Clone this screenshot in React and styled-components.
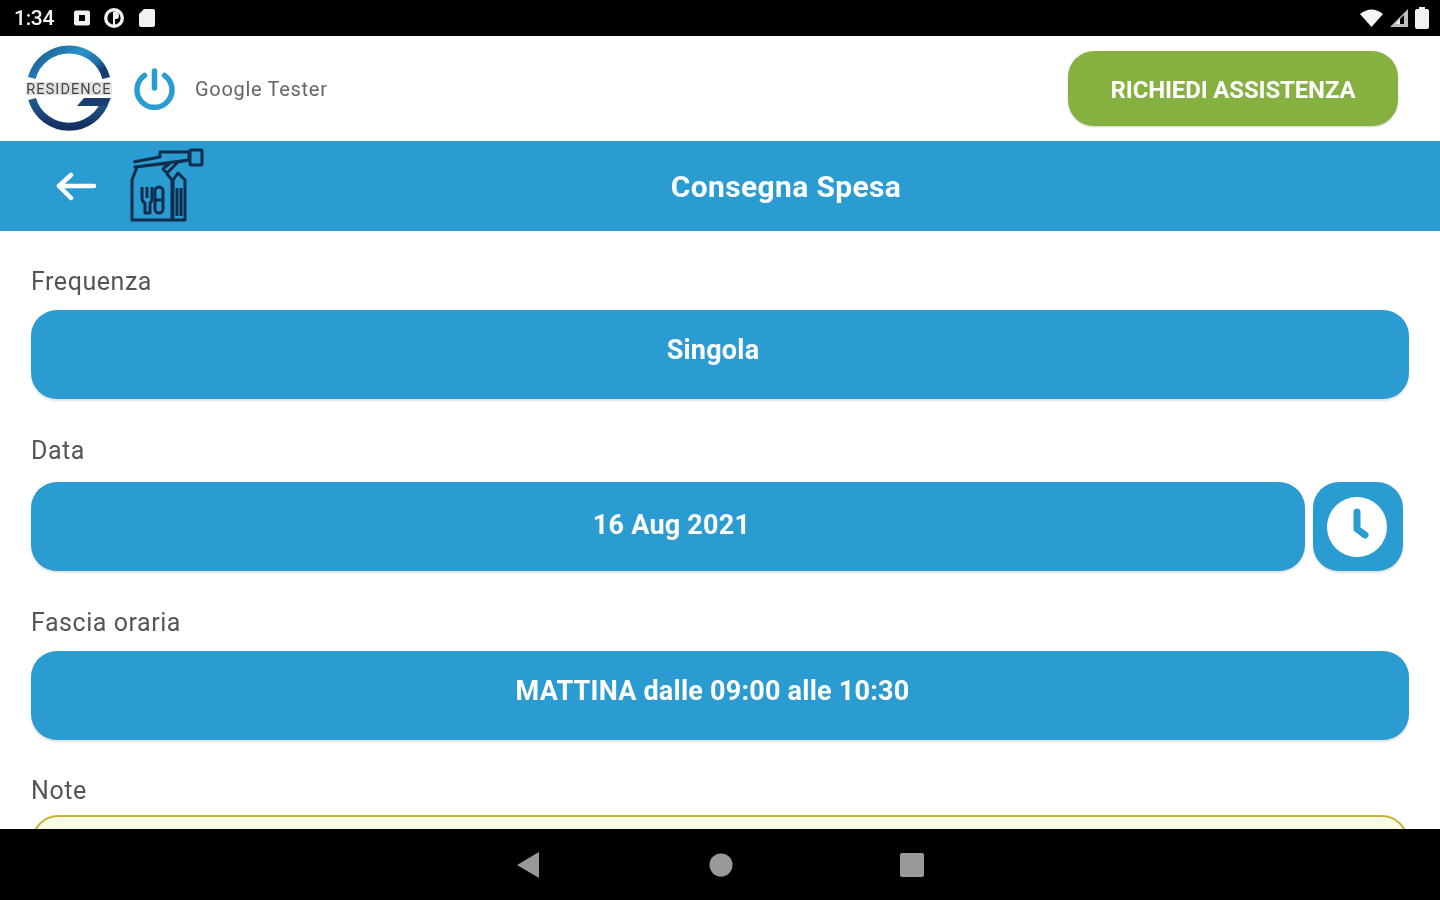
import React from "react";
import styled, { createGlobalStyle } from "styled-components";

const Global = createGlobalStyle`
  html, body { margin: 0; padding: 0; background: #fff; }
  body { font-family: Roboto, "Liberation Sans", sans-serif; }
`;
const Screen = styled.div`
  width: 1440px; height: 900px; display: flex; flex-direction: column; overflow: hidden; background: #fff;
`;
const StatusBar = styled.div`
  height: 36px; flex: none; background: #000; color: #f2f2f2; display: flex; align-items: center;
  justify-content: space-between; padding: 0 11px 0 14px; box-sizing: border-box;
`;
const StatusGroup = styled.div`
  display: flex; align-items: center; gap: ${p => p.$gap || 11}px;
`;
const Clock = styled.span`
  font-size: 21px; font-weight: 500; letter-spacing: -0.3px; margin-right: 9px; filter: blur(0.5px);
`;
const Header = styled.header`
  height: 105px; flex: none; display: flex; align-items: center; padding: 0 42px 0 26px; box-sizing: border-box;
`;
const UserName = styled.span`
  font-size: 20px; color: #666; letter-spacing: 0.7px; margin-left: 19px; margin-top: 1px; filter: blur(0.5px);
`;
const Assist = styled.button`
  margin-left: auto; width: 330px; height: 75px; border: none; border-radius: 26px; background: #86b03f;
  color: #fff; font: 700 24px Roboto, sans-serif; letter-spacing: -0.15px; box-shadow: 0 1px 2px rgba(0,0,0,.2); padding: 3px 0 0;
  & > span { filter: blur(0.45px); display: inline-block; }
`;
const TitleBar = styled.div`
  height: 90px; flex: none; background: #2b9cd2; display: grid; grid-template-columns: 1fr auto 1fr;
  align-items: center;
`;
const TitleLeft = styled.div`
  display: flex; align-items: center; padding-left: 56px; gap: 32px;
`;
const Title = styled.h1`
  margin: 1px 0 0 132px; color: #fff; font: 700 30px Roboto, sans-serif; letter-spacing: 0.35px; filter: blur(0.45px);
`;
const Content = styled.main`
  flex: 1; min-height: 0; overflow: hidden; padding: 36px 31px 0; display: flex; flex-direction: column;
`;
const Label = styled.div`
  font-size: 25px; line-height: 30px; height: 28px; color: #555; letter-spacing: 0.55px; filter: blur(0.45px);
  margin-top: ${p => p.$top || 0}px; margin-bottom: ${p => p.$bottom || 15}px;
`;
const Row = styled.div`
  display: flex; gap: 8px; align-items: stretch;
`;
const Pill = styled.div`
  flex: 1; height: 89px; border-radius: 26px; background: #2b9cd2; color: #fff; box-sizing: border-box;
  font-weight: 700; font-size: 27px; text-align: center; line-height: 28px;
  padding: ${p => p.$pt || 26}px ${p => p.$pr ?? 14}px 0 ${p => p.$pl || 0}px; box-shadow: 0 2px 2px rgba(0,0,0,.12);
  letter-spacing: 0.22px;
  & > span { filter: blur(0.45px); display: inline-block; }
`;
const ClockButton = styled.div`
  width: 90px; height: 89px; flex: none; margin-right: 6px; border-radius: 26px; background: #2b9cd2; padding-right: 2px; box-sizing: border-box;
  display: flex; align-items: center; justify-content: center; box-shadow: 0 2px 2px rgba(0,0,0,.12);
`;
const NoteBox = styled.div`
  height: 60px; flex: none; border: 2px solid #c9b23a; border-radius: 26px; background: #f6fbe4; box-sizing: border-box;
  margin: 0 1px;
`;
const NavBar = styled.nav`
  height: 71px; flex: none; background: #000; display: flex; align-items: center; justify-content: center; padding-left: 2px;
`;
const NavSlot = styled.div`
  width: 191px; display: flex; justify-content: center; margin-top: 1px; padding-right: ${p => p.$pr || 0}px; box-sizing: border-box;
`;

const Logo = () => (
  <svg width="86" height="88" viewBox="0 0 86 88" style={{ filter: "blur(0.6px)" }}>
    <defs>
      <linearGradient id="ring" x1="0" y1="0.2" x2="1" y2="0.6">
        <stop offset="0" stopColor="#1c5c90" />
        <stop offset="0.55" stopColor="#2b93cb" />
        <stop offset="0.85" stopColor="#1f6ea6" />
        <stop offset="1" stopColor="#173a6e" />
      </linearGradient>
      <linearGradient id="low" x1="0" y1="0" x2="0" y2="1">
        <stop offset="0" stopColor="#1f5f92" />
        <stop offset="1" stopColor="#15305f" />
      </linearGradient>
    </defs>
    <path d="M5.8 33 A38.5 38.5 0 0 1 80.2 33" fill="none" stroke="url(#ring)" strokeWidth="8" />
    <path d="M6.1 54 A38.5 38.5 0 0 0 80 54" fill="none" stroke="url(#low)" strokeWidth="8" />
    <path d="M51 61 L58 53 H85 L80 61 Z" fill="#1b3f74" />
    <rect x="0" y="37" width="86" height="13" fill="#e2e2e2" />
    <text x="43" y="48.5" textAnchor="middle" fontFamily="Roboto, sans-serif" fontSize="14.5" fill="#444" letterSpacing="1.1">RESIDENCE</text>
  </svg>
);
const PowerIcon = () => (
  <svg width="42" height="44" viewBox="0 0 42 44" fill="none" stroke="#2b9cd2" strokeWidth="5.5" strokeLinecap="round" style={{ marginLeft: 22, filter: "blur(0.4px)" }}>
    <path d="M10.5 8.5 A17.5 17.5 0 1 0 30.5 8.5" />
    <path d="M20.5 4 V21" />
  </svg>
);
const BackArrow = () => (
  <svg width="42" height="30" viewBox="0 0 42 30" fill="none" stroke="#fff" strokeWidth="4.5" strokeLinecap="round" strokeLinejoin="round">
    <path d="M38 15 H5 M15 4 L3 15 L15 27" />
  </svg>
);
const ShopIcon = () => (
  <svg width="74" height="76" viewBox="0 0 74 76" fill="none" stroke="#0f2d4c" strokeWidth="3" strokeLinejoin="round" style={{ filter: "blur(0.35px)" }}>
    <path d="M3.5 14 L30 9 V4 H59 M59 12 L48 14 L37 25 L33 21 L40 15 L5 19 Z" />
    <rect x="60" y="2" width="12" height="15" rx="1" />
    <path d="M59 4 V13" />
    <path d="M7 19 L2 32 V72 H42 V32 L37 26" />
    <path d="M48 25 L43 32 V72 H55 V32 Z" />
    <path d="M47 40 V68 M51 40 V68" />
    <path d="M12 39 V50 Q12 54 15 55 V65 H20 V55 Q22 54 22 50 V39 M17 39 V50" />
    <rect x="25" y="39" width="8" height="26" rx="4" />
    <path d="M25 52 H33" />
  </svg>
);
const ClockIcon = () => (
  <svg width="60" height="60" viewBox="0 0 60 60">
    <circle cx="30" cy="30" r="30" fill="#fff" />
    <path d="M30 15 V32 L38 38" fill="none" stroke="#2b9cd2" strokeWidth="7" strokeLinecap="round" strokeLinejoin="round" />
  </svg>
);

export default function App() {
  return (
    <Screen>
      <Global />
      <StatusBar>
        <StatusGroup>
          <Clock>1:34</Clock>
          <svg width="16" height="16" viewBox="0 0 16 16"><rect width="16" height="15" y="0.5" rx="2" fill="#f2f2f2" /><rect x="5" y="5" width="6" height="6" fill="#000" /></svg>
          <svg width="22" height="20" viewBox="0 0 22 20" style={{ marginLeft: 2 }}><circle cx="11" cy="10" r="10" fill="#f2f2f2" /><circle cx="11" cy="10" r="6.6" fill="#000" /><path d="M10 4 H14 A4 4 0 0 1 14 11 H12 V17 H10 Z" fill="#f2f2f2" /></svg>
          <svg width="16" height="18" viewBox="0 0 16 18" style={{ marginLeft: 3 }}><path d="M5 0 H14 A2 2 0 0 1 16 2 V16 A2 2 0 0 1 14 18 H2 A2 2 0 0 1 0 16 V5 Z" fill="#f2f2f2" /></svg>
        </StatusGroup>
        <StatusGroup $gap={7}>
          <svg width="23" height="18" viewBox="0 0 23 18"><path d="M0 5 Q11.5 -4 23 5 L11.5 18 Z" fill="#f6f6f6" /></svg>
          <svg width="18" height="18" viewBox="0 0 18 18"><path d="M18 0 V18 H0 Z" fill="#bdbdbd" /><path d="M14 6 V15 H5 Z" fill="#000" /><path d="M10 9.5 V15 H5 Z" fill="#eee" /></svg>
          <svg width="14" height="22" viewBox="0 0 14 22"><rect x="4" width="6" height="3" fill="#f2f2f2" /><rect y="2" width="14" height="20" rx="2" fill="#f2f2f2" /></svg>
        </StatusGroup>
      </StatusBar>
      <Header>
        <Logo />
        <PowerIcon />
        <UserName>Google Tester</UserName>
        <Assist><span>RICHIEDI ASSISTENZA</span></Assist>
      </Header>
      <TitleBar>
        <TitleLeft>
          <BackArrow />
          <ShopIcon />
        </TitleLeft>
        <Title>Consegna Spesa</Title>
        <div />
      </TitleBar>
      <Content>
        <Label $bottom={15}>Frequenza</Label>
        <Row><Pill><span>Singola</span></Pill></Row>
        <Label $top={37} $bottom={18}>Data</Label>
        <Row>
          <Pill $pt={29} $pr={0} $pl={7}><span>16 Aug 2021</span></Pill>
          <ClockButton><ClockIcon /></ClockButton>
        </Row>
        <Label $top={37} $bottom={15}>Fascia oraria</Label>
        <Row><Pill $pr={15}><span>MATTINA dalle 09:00 alle 10:30</span></Pill></Row>
        <Label $top={36} $bottom={11}>Note</Label>
        <NoteBox />
      </Content>
      <NavBar>
        <NavSlot $pr={4}><svg width="24" height="28" viewBox="0 0 24 28"><path d="M23 1 V27 L1 14 Z" fill="#999" /></svg></NavSlot>
        <NavSlot><svg width="24" height="24" viewBox="0 0 24 24"><circle cx="12" cy="12" r="11.5" fill="#999" /></svg></NavSlot>
        <NavSlot><svg width="24" height="24" viewBox="0 0 24 24"><rect width="24" height="24" rx="2" fill="#999" /></svg></NavSlot>
      </NavBar>
    </Screen>
  );
}
